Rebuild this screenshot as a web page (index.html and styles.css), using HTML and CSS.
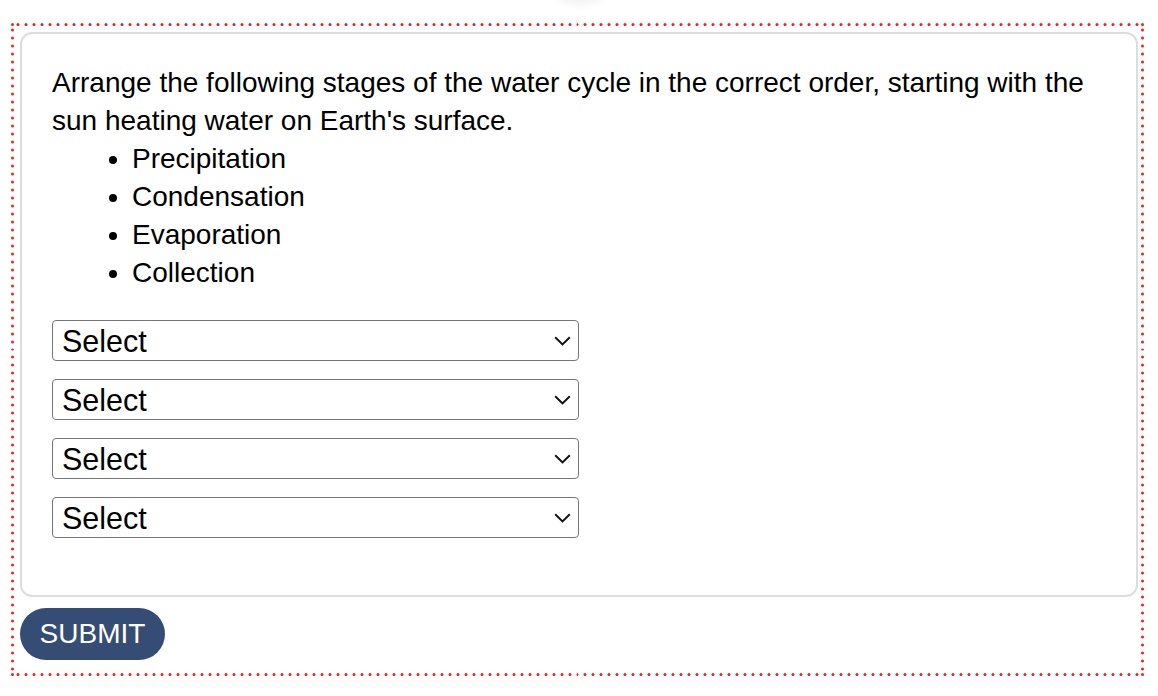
FILE: index.html
```html
<!DOCTYPE html>
<html lang="en">
<head>
<meta charset="utf-8">
<title>Water cycle</title>
<link rel="stylesheet" href="styles.css">
</head>
<body>
<div class="glow"></div>
<div class="frame">
  <div class="card">
    <p class="question">Arrange the following stages of the water cycle in the correct order, starting with the sun heating water on Earth's surface.</p>
    <ul class="stages">
      <li>Precipitation</li>
      <li>Condensation</li>
      <li>Evaporation</li>
      <li>Collection</li>
    </ul>
    <div class="selects">
      <select class="pick"><option>Select</option></select>
      <select class="pick"><option>Select</option></select>
      <select class="pick"><option>Select</option></select>
      <select class="pick"><option>Select</option></select>
    </div>
  </div>
  <button class="submit">SUBMIT</button>
</div>
</body>
</html>
```

FILE: styles.css
```css
html, body {
  margin: 0;
  padding: 0;
  background: #ffffff;
}
body {
  padding: 23px 0 0 11px;
  font-family: "Liberation Sans", Arial, sans-serif;
  color: #000;
  position: relative;
}
.glow {
  position: absolute;
  top: -14px;
  left: 560px;
  width: 40px;
  height: 12px;
  border-radius: 50%;
  box-shadow: 0 0 12px 4px rgba(0, 0, 0, 0.08);
}
.frame {
  width: 1118px;
  border: 3px solid transparent;
  border-image-source: url("data:image/svg+xml;utf8,<svg xmlns='http://www.w3.org/2000/svg' width='14' height='14' viewBox='0 0 14 14'><g fill='%23f21d1d'><circle cx='1.5' cy='1.5' r='1.5'/><circle cx='12.5' cy='1.5' r='1.5'/><circle cx='1.5' cy='12.5' r='1.5'/><circle cx='12.5' cy='12.5' r='1.5'/><circle cx='7' cy='1.5' r='1.5'/><circle cx='7' cy='12.5' r='1.5'/><circle cx='1.5' cy='7' r='1.5'/><circle cx='12.5' cy='7' r='1.5'/></g></svg>");
  border-image-slice: 3;
  border-image-width: 3px;
  border-image-repeat: round;
  padding: 6px 3px 13px 6px;
  box-sizing: content-box;
}
.card {
  border: 2px solid #dddddd;
  border-radius: 12px;
  padding: 30px 30px 57px 30px;
}
.question {
  margin: 0;
  font-size: 28px;
  line-height: 38px;
}
.stages {
  margin: 0;
  padding-left: 80px;
  font-size: 28px;
  line-height: 38px;
}
.selects {
  display: flex;
  flex-direction: column;
  gap: 18px;
  margin-top: 28px;
}
.pick {
  appearance: none;
  -webkit-appearance: none;
  width: 527px;
  height: 41px;
  box-sizing: border-box;
  border: 1px solid #767676;
  border-radius: 4px;
  background-color: #fff;
  background-image: url("data:image/svg+xml;utf8,<svg xmlns='http://www.w3.org/2000/svg' width='17' height='10' viewBox='0 0 17 10'><path d='M1.2 1.3 L8.5 8.4 L15.8 1.3' fill='none' stroke='%23111' stroke-width='2'/></svg>");
  background-repeat: no-repeat;
  background-position: right 7px center;
  padding: 0 0 0 9px;
  font-family: "Liberation Sans", Arial, sans-serif;
  font-size: 30.5px;
  color: #000;
  margin: 0;
}
.submit {
  margin-top: 11px;
  height: 52px;
  width: 145px;
  border: none;
  border-radius: 26px;
  background: #354d75;
  color: #fff;
  font-family: "Liberation Sans", Arial, sans-serif;
  font-size: 28px;
  padding: 0;
  display: block;
}
```
